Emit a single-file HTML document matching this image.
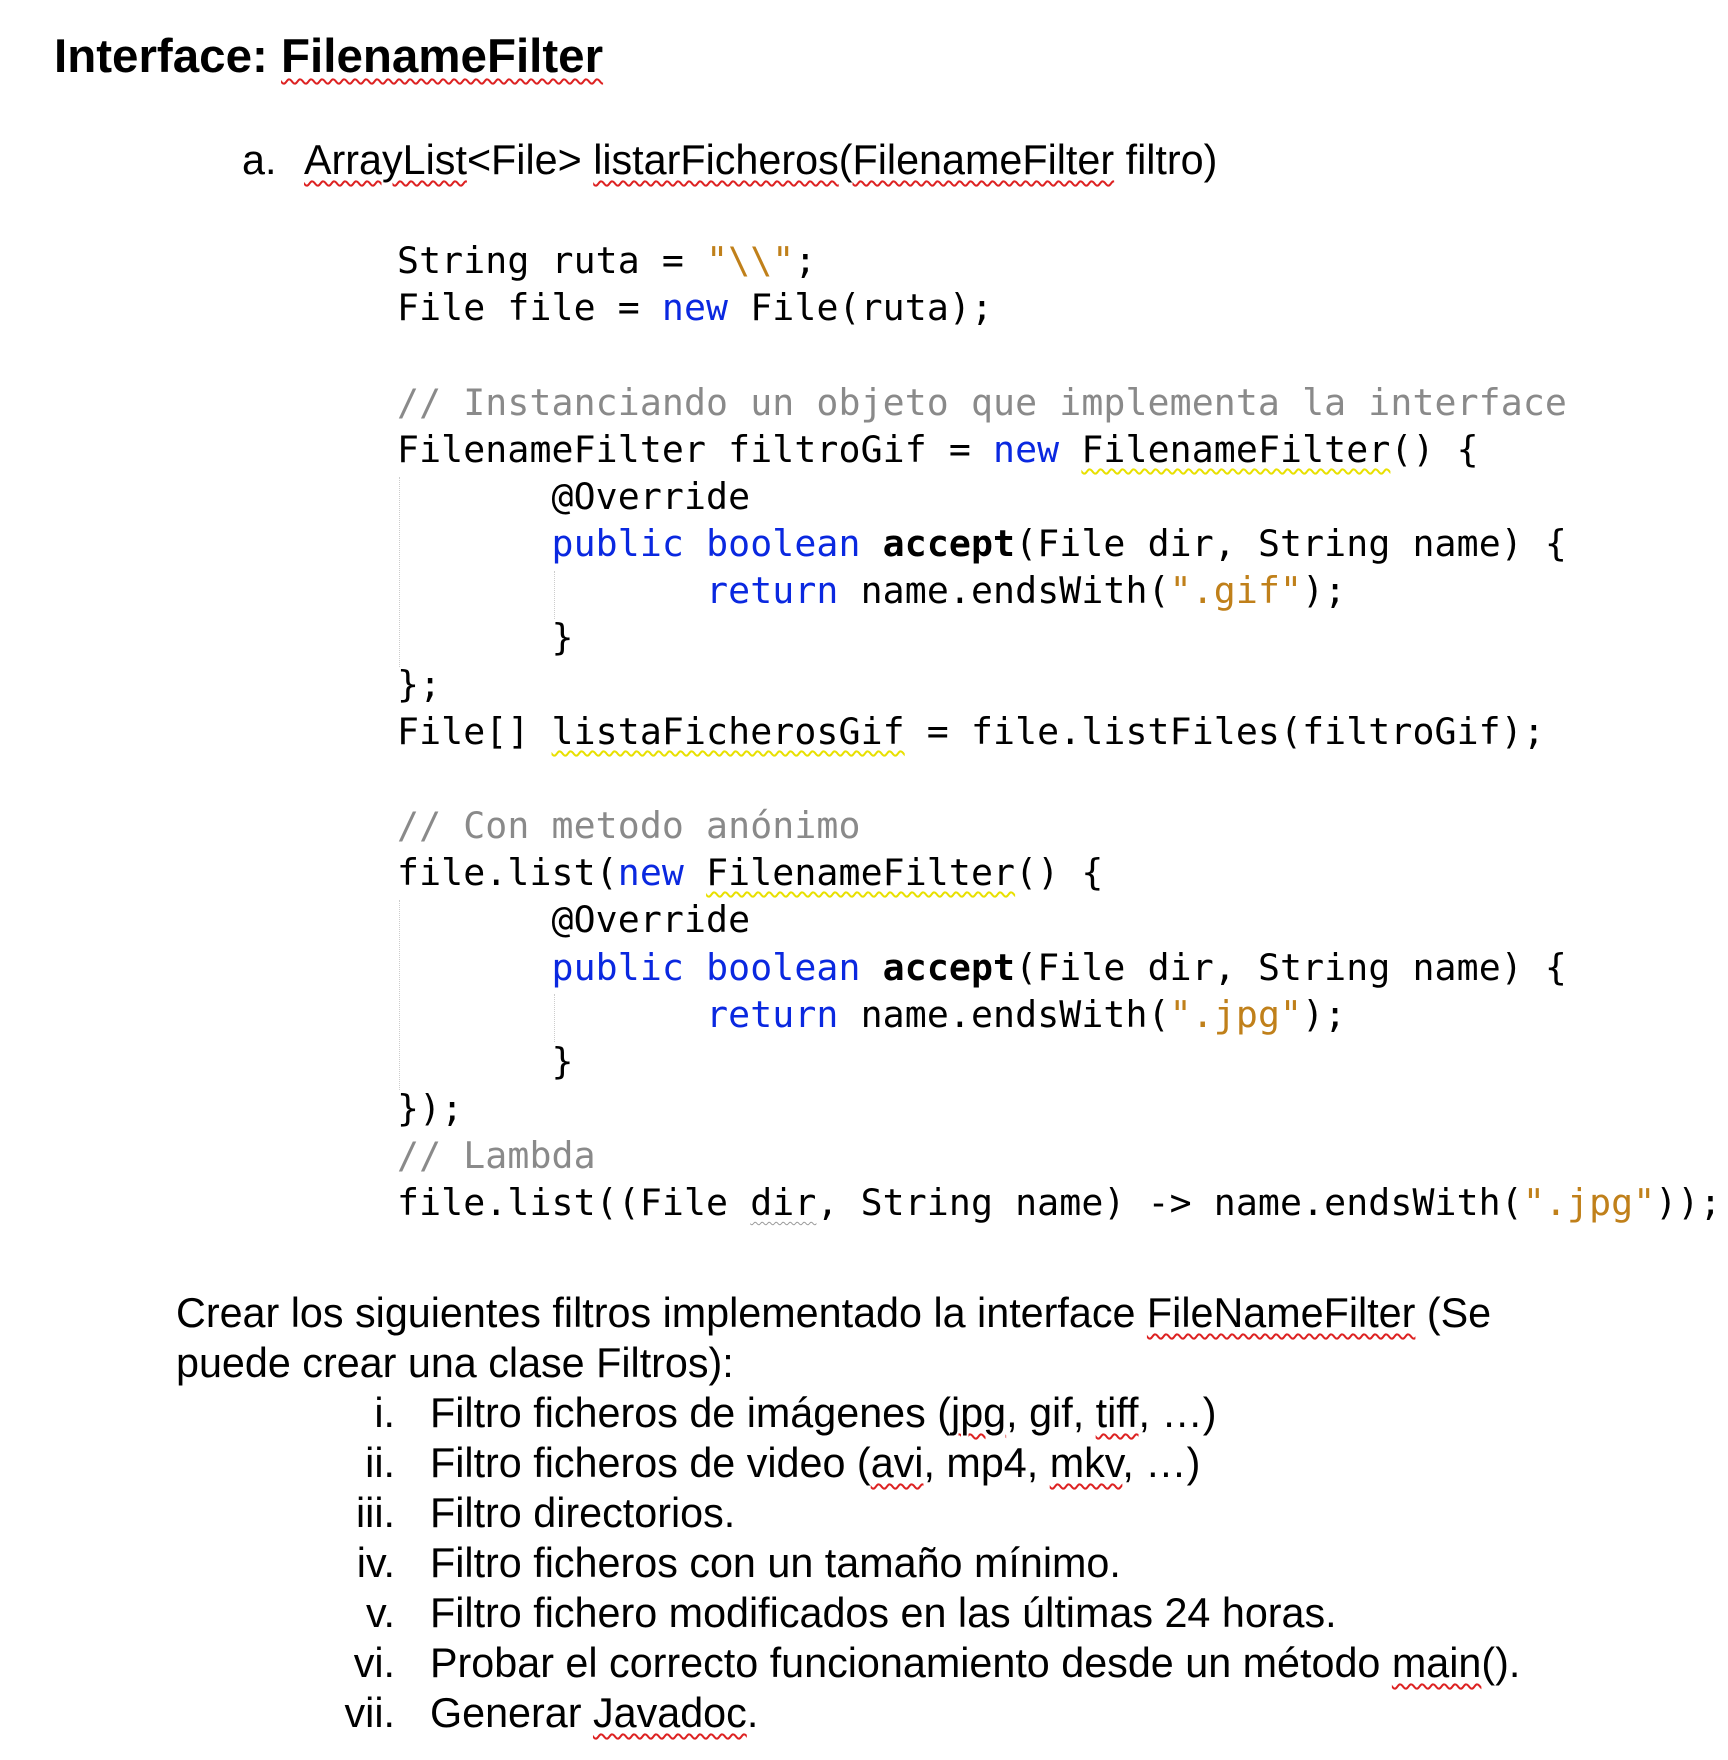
<!DOCTYPE html>
<html><head><meta charset="utf-8"><style>
body{margin:0;width:1728px;height:1760px;background:#fff;position:relative;overflow:hidden;font-family:"Liberation Sans",Arial,sans-serif;color:#000}
.a{position:absolute;white-space:pre;line-height:1}
.t{font-weight:bold;font-size:47.5px}
.s{font-size:41.3px}
.c{font-family:"DejaVu Sans Mono","Liberation Mono",monospace;font-size:36.5px;letter-spacing:0.1px}
.k{color:#0a28e0}.str{color:#c0801a}.cm{color:#8a8a8a}.b{font-weight:bold}
.r{text-decoration:underline wavy #d22;text-decoration-thickness:1.5px;text-underline-offset:6px}
.y{text-decoration:underline wavy #e8e000;text-decoration-thickness:1.5px;text-underline-offset:6px}
.g{text-decoration:underline wavy #999;text-decoration-thickness:1px;text-underline-offset:6px}
.v{position:absolute;width:0;border-left:1.5px dotted #ccc}
.n{position:absolute;width:60px;text-align:right;font-size:41.3px;line-height:1}
</style></head><body>
<div class="a t" style="left:54px;top:33px">Interface: <span class="r">FilenameFilter</span></div>
<div class="a s" style="left:242px;top:140px">a.</div>
<div class="a s" style="left:304px;top:140px"><span class="r">ArrayList</span>&lt;File&gt; <span class="r">listarFicheros</span>(<span class="r">FilenameFilter</span> filtro)</div>

<div class="a c" style="left:397px;top:243px">String ruta = <span class="str">"\\"</span>;</div>
<div class="a c" style="left:397px;top:290px">File file = <span class="k">new</span> File(ruta);</div>
<div class="a c cm" style="left:397px;top:385px">// Instanciando un objeto que implementa la interface</div>
<div class="a c" style="left:397px;top:432px">FilenameFilter filtroGif = <span class="k">new</span> <span class="y">FilenameFilter</span>() {</div>
<div class="a c" style="left:397px;top:479px">       @Override</div>
<div class="a c" style="left:397px;top:526px">       <span class="k">public</span> <span class="k">boolean</span> <span class="b">accept</span>(File dir, String name) {</div>
<div class="a c" style="left:397px;top:573px">              <span class="k">return</span> name.endsWith(<span class="str">".gif"</span>);</div>
<div class="a c" style="left:397px;top:620px">       }</div>
<div class="a c" style="left:397px;top:667px">};</div>
<div class="a c" style="left:397px;top:714px">File[] <span class="y">listaFicherosGif</span> = file.listFiles(filtroGif);</div>
<div class="a c cm" style="left:397px;top:808px">// Con metodo anónimo</div>
<div class="a c" style="left:397px;top:855px">file.list(<span class="k">new</span> <span class="y">FilenameFilter</span>() {</div>
<div class="a c" style="left:397px;top:902px">       @Override</div>
<div class="a c" style="left:397px;top:950px">       <span class="k">public</span> <span class="k">boolean</span> <span class="b">accept</span>(File dir, String name) {</div>
<div class="a c" style="left:397px;top:997px">              <span class="k">return</span> name.endsWith(<span class="str">".jpg"</span>);</div>
<div class="a c" style="left:397px;top:1044px">       }</div>
<div class="a c" style="left:397px;top:1091px">});</div>
<div class="a c cm" style="left:397px;top:1138px">// Lambda</div>
<div class="a c" style="left:397px;top:1185px">file.list((File <span class="g">dir</span>, String name) -&gt; name.endsWith(<span class="str">".jpg"</span>));</div>
<div class="v" style="left:399px;top:477px;height:190px"></div>
<div class="v" style="left:554px;top:571px;height:48px"></div>
<div class="v" style="left:399px;top:900px;height:190px"></div>
<div class="v" style="left:554px;top:994px;height:48px"></div>

<div class="a s" style="left:176px;top:1293px">Crear los siguientes filtros implementado la interface <span class="r">FileNameFilter</span> (Se</div>
<div class="a s" style="left:176px;top:1343px">puede crear una clase Filtros):</div>
<div class="n" style="left:335px;top:1393px">i.</div><div class="a s" style="left:430px;top:1393px">Filtro ficheros de imágenes (<span class="r">jpg</span>, gif, <span class="r">tiff</span>, …)</div>
<div class="n" style="left:335px;top:1443px">ii.</div><div class="a s" style="left:430px;top:1443px">Filtro ficheros de video (<span class="r">avi</span>, mp4, <span class="r">mkv</span>, …)</div>
<div class="n" style="left:335px;top:1493px">iii.</div><div class="a s" style="left:430px;top:1493px">Filtro directorios.</div>
<div class="n" style="left:335px;top:1543px">iv.</div><div class="a s" style="left:430px;top:1543px">Filtro ficheros con un tamaño mínimo.</div>
<div class="n" style="left:335px;top:1593px">v.</div><div class="a s" style="left:430px;top:1593px">Filtro fichero modificados en las últimas 24 horas.</div>
<div class="n" style="left:335px;top:1643px">vi.</div><div class="a s" style="left:430px;top:1643px">Probar el correcto funcionamiento desde un método <span class="r">main</span>().</div>
<div class="n" style="left:335px;top:1693px">vii.</div><div class="a s" style="left:430px;top:1693px">Generar <span class="r">Javadoc</span>.</div>
</body></html>
